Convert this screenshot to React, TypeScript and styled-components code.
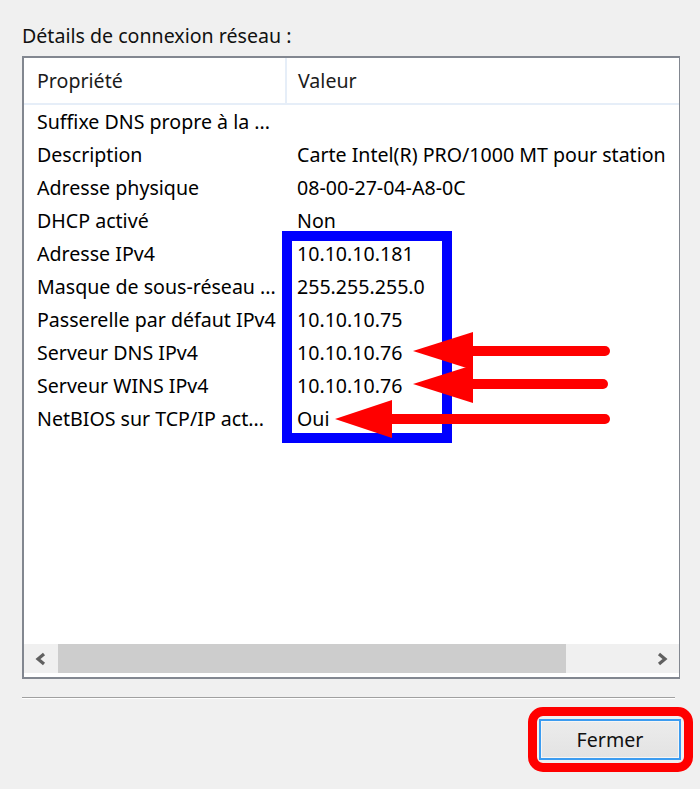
import styled, { createGlobalStyle } from 'styled-components';

const GlobalStyle = createGlobalStyle`
  html, body {
    margin: 0;
    padding: 0;
    background: #f0f0f0;
  }
  body {
    font-family: 'Noto Sans', 'DejaVu Sans', sans-serif;
    font-size: 19.6px;
    color: #000;
  }
`;

const Page = styled.div`
  position: relative;
  width: 700px;
  height: 789px;
  box-sizing: border-box;
  padding: 22px 20px 0 22px;
  display: flex;
  flex-direction: column;
  overflow: hidden;
`;

const Caption = styled.div`
  height: 28px;
  line-height: 28px;
  margin-bottom: 6px;
  color: #111;
`;

const ListBox = styled.div`
  position: relative;
  height: 623px;
  box-sizing: border-box;
  border: 2px solid #828790;
  border-right-width: 1px;
  background: #fff;
  display: flex;
  flex-direction: column;
  overflow: hidden;
`;

const HeaderRow = styled.div`
  display: flex;
  height: 45px;
  border-bottom: 2px solid #e6eef8;
  flex-shrink: 0;
`;

const HeaderCell = styled.div<{ $width?: number }>`
  ${({ $width }) => ($width ? `width: ${$width}px; flex-shrink: 0;` : 'flex: 1;')}
  box-sizing: border-box;
  padding-left: ${({ $width }) => ($width ? 13 : 11)}px;
  line-height: 45px;
  border-right: ${({ $width }) => ($width ? '2px solid #e6eef8' : 'none')};
  color: #1b1b1b;
`;

const Body = styled.div`
  flex: 1;
`;

const Row = styled.div`
  display: flex;
  height: 33px;
  line-height: 33px;
  white-space: nowrap;
`;

const Cell = styled.div<{ $width?: number }>`
  ${({ $width }) => ($width ? `width: ${$width}px; flex-shrink: 0;` : 'flex: 1; min-width: 0;')}
  box-sizing: border-box;
  padding-left: ${({ $width }) => ($width ? 13 : 12)}px;
  overflow: hidden;
`;

const HScroll = styled.div`
  display: flex;
  height: 29px;
  margin-bottom: 4px;
  background: #f0f0f0;
  flex-shrink: 0;
`;

const ArrowButton = styled.div`
  width: 34px;
  display: flex;
  align-items: center;
  justify-content: center;
  flex-shrink: 0;
`;

const Track = styled.div`
  flex: 1;
  display: flex;
`;

const Thumb = styled.div`
  width: 508px;
  background: #cdcdcd;
`;

const Highlight = styled.div`
  position: absolute;
  left: 258px;
  top: 173px;
  width: 170px;
  height: 212px;
  box-sizing: border-box;
  border: 10px solid #0000ff;
  pointer-events: none;
`;

const Separator = styled.div`
  margin-top: 18px;
  margin-right: 5px;
  height: 1px;
  background: #a0a0a0;
  border-bottom: 1px solid #fff;
`;

const Footer = styled.div`
  display: flex;
  justify-content: flex-end;
  margin-top: 20px;
`;

const ButtonFrame = styled.div`
  position: relative;
  margin-right: -1px;
`;

const Button = styled.button`
  width: 142px;
  height: 41px;
  box-sizing: border-box;
  border: 2px solid #3c9cf0;
  border-radius: 0;
  background: linear-gradient(#ececec, #e3e3e3);
  font-family: 'Noto Sans', 'DejaVu Sans', sans-serif;
  font-size: 19.6px;
  color: #111;
  padding: 0;
  box-shadow: inset 0 0 0 1px #f6f6f6;
`;

const RedFrame = styled.div`
  position: absolute;
  left: -11px;
  top: -12px;
  right: -12px;
  bottom: -12px;
  border: 9px solid #ff0000;
  border-radius: 15px;
  pointer-events: none;
`;

const Arrows = styled.svg`
  position: absolute;
  left: 0;
  top: 0;
  pointer-events: none;
`;

const rows: [string, string][] = [
  ['Suffixe DNS propre à la ...', ''],
  ['Description', 'Carte Intel(R) PRO/1000 MT pour station'],
  ['Adresse physique', '08-00-27-04-A8-0C'],
  ['DHCP activé', 'Non'],
  ['Adresse IPv4', '10.10.10.181'],
  ['Masque de sous-réseau ...', '255.255.255.0'],
  ['Passerelle par défaut IPv4', '10.10.10.75'],
  ['Serveur DNS IPv4', '10.10.10.76'],
  ['Serveur WINS IPv4', '10.10.10.76'],
  ['NetBIOS sur TCP/IP act...', 'Oui'],
];

const arrows = [
  { tipX: 413, y: 351, baseX: 473, half: 19, end: 605 },
  { tipX: 413, y: 384, baseX: 473, half: 19, end: 603 },
  { tipX: 335, y: 419, baseX: 392, half: 19, end: 605 },
];

const Chevron = ({ dir }: { dir: 'left' | 'right' }) => (
  <svg width="12" height="14" viewBox="0 0 12 14">
    <polyline
      points={dir === 'left' ? '9,2 3,7 9,12' : '3,2 9,7 3,12'}
      fill="none"
      stroke="#606060"
      strokeWidth="3.2"
    />
  </svg>
);

export default function App() {
  return (
    <Page>
      <GlobalStyle />
      <Caption>Détails de connexion réseau :</Caption>
      <ListBox>
        <HeaderRow>
          <HeaderCell $width={263}>Propriété</HeaderCell>
          <HeaderCell>Valeur</HeaderCell>
        </HeaderRow>
        <Body>
          {rows.map(([name, value], i) => (
            <Row key={i}>
              <Cell $width={261}>{name}</Cell>
              <Cell>{value}</Cell>
            </Row>
          ))}
        </Body>
        <HScroll>
          <ArrowButton>
            <Chevron dir="left" />
          </ArrowButton>
          <Track>
            <Thumb />
          </Track>
          <ArrowButton>
            <Chevron dir="right" />
          </ArrowButton>
        </HScroll>
        <Highlight />
      </ListBox>
      <Separator />
      <Footer>
        <ButtonFrame>
          <Button>Fermer</Button>
          <RedFrame />
        </ButtonFrame>
      </Footer>
      <Arrows width="700" height="789" viewBox="0 0 700 789">
        {arrows.map((a, i) => (
          <g key={i} fill="#ff0000" stroke="#ff0000">
            <line x1={a.baseX - 4} y1={a.y} x2={a.end} y2={a.y} strokeWidth="10" strokeLinecap="round" />
            <polygon points={`${a.tipX},${a.y} ${a.baseX},${a.y - a.half} ${a.baseX},${a.y + a.half}`} strokeWidth="0" />
          </g>
        ))}
      </Arrows>
    </Page>
  );
}
